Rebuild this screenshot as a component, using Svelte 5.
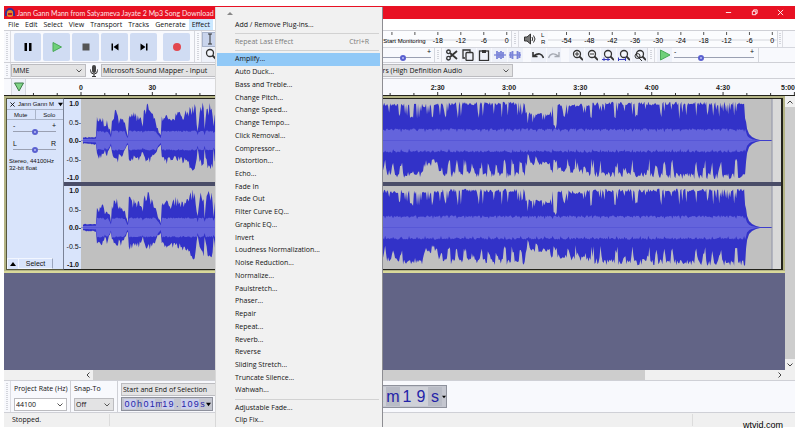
<script lang="ts">
  interface Point {
    x: number;
    up: number;
    down: number;
  }

  const MENUS = ['File', 'Edit', 'Select', 'View', 'Transport', 'Tracks', 'Generate', 'Effect'];

  const EFFECTS = [
    'Amplify...', 'Auto Duck...', 'Bass and Treble...', 'Change Pitch...', 'Change Speed...',
    'Change Tempo...', 'Click Removal...', 'Compressor...', 'Distortion...', 'Echo...',
    'Fade In', 'Fade Out', 'Filter Curve EQ...', 'Graphic EQ...', 'Invert',
    'Loudness Normalization...', 'Noise Reduction...', 'Normalize...', 'Paulstretch...',
    'Phaser...', 'Repair', 'Repeat...', 'Reverb...', 'Reverse', 'Sliding Stretch...',
    'Truncate Silence...', 'Wahwah...',
  ];

  const TRANSPORT = ['Pause', 'Play', 'Stop', 'Skip to Start', 'Skip to End', 'Record'];
  const EDIT_TOOLS = ['Cut', 'Copy', 'Paste', 'Trim', 'Silence'];
  const ZOOM_TOOLS = ['Zoom In', 'Zoom Out', 'Fit Selection', 'Fit Project', 'Zoom Toggle'];

  const LEVELS = [-54, -48, -42, -36, -30, -24, -18, -12, -6, 0];
  const SECONDS = Array.from({ length: 33 }, (_, i) => (i - 2) * 10);

  // peak envelope: position, height above and below the centre line
  const ENVELOPE: number[][] = [
    [0, 3, 3], [15, 4, 4], [16, 25, 16], [18, 22, 18], [22, 24, 17], [24, 15, 12], [26, 22, 16],
    [29, 12, 8], [30, 6, 5], [31, 23, 14], [35, 34, 20], [37, 29, 22], [38, 18, 13], [40, 26, 18],
    [44, 18, 12], [46, 8, 6], [47, 5, 5], [48, 33, 23], [52, 29, 20], [58, 27, 20], [61, 21, 14],
    [62, 16, 12], [63, 30, 18], [67, 37, 23], [71, 31, 20], [74, 24, 17], [77, 13, 9], [80, 5, 5],
    [81, 25, 16], [86, 30, 23], [90, 26, 20], [95, 30, 19], [100, 29, 22], [106, 30, 23],
    [110, 37, 33], [113, 38, 36], [115, 34, 27], [117, 11, 9], [119, 35, 23], [123, 38, 29],
    [124, 12, 9], [126, 34, 25], [129, 38, 33], [132, 34, 29], [133, 15, 10], [135, 34, 30],
    [220, 35, 32], [302, 37, 33], [320, 37, 37], [343, 36, 36], [346, 36, 26], [357, 36, 24],
    [360, 38, 37], [385, 38, 35], [410, 38, 37], [445, 38, 37], [446, 28, 25], [470, 26, 24],
    [471, 37, 33], [473, 37, 33], [474, 15, 21], [477, 16, 23], [478, 37, 31], [500, 36, 33],
    [520, 38, 37], [560, 38, 37], [605, 38, 38], [666, 38, 38], [667, 18, 20], [668, 11, 12],
    [670, 6, 6], [673, 3, 3], [677, 1, 1], [682, 0, 0], [693, 0, 0],
  ];

  const WAVE_WIDTH = 702;
  const CLIP_END = 693;
  const HALF = 41;

  function noise(n: number): number {
    const v = Math.sin(n * 127.1 + 11.7) * 43758.5453;
    return v - Math.floor(v);
  }

  function envelopeAt(x: number): Point {
    let i = 0;
    while (i < ENVELOPE.length - 2 && ENVELOPE[i + 1][0] <= x) i++;
    const [x0, u0, d0] = ENVELOPE[i];
    const [x1, u1, d1] = ENVELOPE[i + 1];
    const t = Math.min(1, (x - x0) / (x1 - x0));
    return { x, up: u0 + (u1 - u0) * t, down: d0 + (d1 - d0) * t };
  }

  function toPath(points: Point[]): string {
    const top = points.map((p) => `${p.x} ${(HALF - p.up).toFixed(1)}`);
    const bottom = points.map((p) => `${p.x} ${(HALF + p.down).toFixed(1)}`).reverse();
    return `M${top.join('L')}L${bottom.join('L')}Z`;
  }

  function buildWave(seed: number) {
    const peak: Point[] = [];
    const rms: Point[] = [];
    for (let x = 2; x <= CLIP_END; x++) {
      const e = envelopeAt(x);
      const tail = x > 666;
      const loud = x > 135 && !tail;
      let up = e.up;
      let down = e.down;
      if (!tail) {
        up *= 1 - noise(x + seed) * (loud ? 0.1 : 0.34);
        down *= 1 - noise(x + seed + 500) * (loud ? 0.18 : 0.3);
      }
      // gaps between beats
      if (loud && noise(x * 3 + 7) > 0.78) up *= 0.6 + noise(x + 3) * 0.25;
      if (loud && x % 8 < 3 && noise(Math.floor(x / 8) + 40) > 0.25) down *= 0.55 + noise(x) * 0.35;
      peak.push({ x, up: up + 0.4, down: down + 0.4 });
      const base = loud ? 12 : tail ? e.up * 0.5 : Math.min(10, e.up * 0.5);
      const beat = loud && x % 8 === 1 ? -2 : 0;
      rms.push({
        x,
        up: Math.max(0, base + beat - noise(x + seed + 90) * base * 0.15),
        down: Math.max(0, base + beat - noise(x + seed + 30) * base * 0.15),
      });
    }
    return { peak: toPath(peak), rms: toPath(rms) };
  }

  const channels = [buildWave(1), buildWave(77)];

  function rulerX(sec: number): string {
    return `${((55 + sec * 2.378) / 769) * 100}%`;
  }

  function rulerLabel(sec: number): string {
    if (sec < 60) return String(sec);
    return `${Math.floor(sec / 60)}:${String(sec % 60).padStart(2, '0')}`;
  }

  let selected = $state('Amplify...');
  let speed = $state(32);
  let volume = $state(68);
  let gain = $state(50);
  let pan = $state(50);
</script>

{#snippet chevron()}
  <svg class="chevron" viewBox="0 0 6 4" aria-hidden="true"><path d="M.5.5 3 3 5.5.5" /></svg>
{/snippet}

{#snippet mic()}
  <svg class="mic" viewBox="0 0 10 12" aria-hidden="true">
    <rect x="3" y="0" width="4" height="8" rx="2" fill="#444" />
    <path d="M1.5 4.5v1a3.5 3.5 0 0 0 7 0v-1M5 9v2.5M3 11.5h4" fill="none" stroke="#333" />
  </svg>
{/snippet}

{#snippet speaker()}
  <svg class="speaker" viewBox="0 0 12 12" aria-hidden="true">
    <path d="M.5 4h2.5l3.5-3v10L3 8H.5z" fill="#777" stroke="#333" />
    <path d="M8 4q1.5 2 0 4M9.5 2.5q3 3.5 0 7" fill="none" stroke="#333" />
  </svg>
{/snippet}

{#snippet meter(first: number, step: number, prompt: boolean)}
  <svg class="meter">
    <line x1="0" y1="9" x2="100%" y2="9" stroke="#d4d6dc" />
    {#each LEVELS as db, i}
      {@const x = `${first + i * step}%`}
      <line x1={x} x2={x} y1="1" y2="4" stroke="#555" />
      {#if !prompt || db > -24}
        <text {x} y="12">{db}</text>
      {/if}
    {/each}
    {#if prompt}
      <text class="prompt" x="63%" y="12">Start Monitoring</text>
    {/if}
  </svg>
{/snippet}

{#snippet loupe()}
  <circle cx="6" cy="5" r="3.5" fill="#f4f6fb" stroke="#333" stroke-width="1.3" />
  <path d="M8.5 7.5 12 11" stroke="#333" stroke-width="1.8" />
{/snippet}

<div class="page">
  <div class="window">
    <header class="titlebar">
      <svg class="logo" viewBox="0 0 10 10" aria-hidden="true">
        <circle cx="5" cy="5" r="4" fill="#e8862a" />
        <path d="M1 8V5a4 4 0 0 1 8 0v3" fill="none" stroke="#2b2f9c" stroke-width="1.8" />
        <path d="M3 6h4" stroke="#c8102e" stroke-width="2" />
      </svg>
      <h1>Jann Gann Mann from Satyameva Jayate 2 Mp3 Song Download</h1>
      <div class="window-buttons">
        <button aria-label="Minimize"><svg viewBox="0 0 8 8"><path d="M1 4h6" /></svg></button>
        <button aria-label="Restore">
          <svg viewBox="0 0 8 8"><path d="M1.5 2.5h4v4h-4zM3 2.5V1h4v4H5.5" /></svg>
        </button>
        <button aria-label="Close"><svg viewBox="0 0 8 8"><path d="m1 1 6 6M7 1 1 7" /></svg></button>
      </div>
    </header>

    <nav class="menubar">
      {#each MENUS as name}
        <button class:open={name === 'Effect'}>{name}</button>
      {/each}
    </nav>

    <div class="toolbars">
      <div class="toolbar transport">
        <span class="grabber"></span>
        {#each TRANSPORT as name}
          <button class="big" class:record={name === 'Record'} aria-label={name}>
            <svg viewBox="0 0 10 10">
              {#if name === 'Pause'}
                <path d="M1.5 1H4v8H1.5zM6 1h2.5v8H6z" fill="#000" />
              {:else if name === 'Play'}
                <path d="M1 .5 9.5 5 1 9.5z" fill="#6fd07a" stroke="#49a957" />
              {:else if name === 'Stop'}
                <path d="M1.5 1.5h7v7h-7z" fill="#555" />
              {:else if name === 'Skip to Start'}
                <path d="M1.5 1.5H3v7H1.5zM8.5 1.5v7L3.5 5z" fill="#000" />
              {:else if name === 'Skip to End'}
                <path d="M7 1.5h1.5v7H7zM1.5 1.5v7l5-3.5z" fill="#000" />
              {:else}
                <circle cx="5" cy="5" r="4" fill="#e2474f" />
              {/if}
            </svg>
          </button>
        {/each}
      </div>

      <div class="toolbar tools">
        <span class="grabber"></span>
        <div class="tool-grid">
          <button class="pressed" aria-label="Selection tool">
            <svg viewBox="0 0 12 12"><path d="M4 1h4M6 1v10M4 11h4" stroke="#333" /></svg>
          </button>
          <button aria-label="Envelope tool">
            <svg viewBox="0 0 12 12"><path d="M1 3l5 3 5-3M1 9l5-3 5 3" stroke="#333" fill="none" /></svg>
          </button>
          <button aria-label="Zoom tool"><svg viewBox="0 0 12 12">{@render loupe()}</svg></button>
          <button aria-label="Multi-tool">
            <svg viewBox="0 0 12 12"><path d="M6 1v10M1 6h10M2 2l8 8M10 2l-8 8" stroke="#333" /></svg>
          </button>
        </div>
      </div>

      <div class="stack">
        <div class="row">
          <div class="toolbar recording">
            <span class="grabber"></span>
            {@render mic()}
            <span class="lr"><span>L</span><span>R</span></span>
            {@render meter(8.3, 10, true)}
          </div>
          <div class="toolbar playback">
            <span class="grabber"></span>
            {@render speaker()}
            <span class="lr"><span>L</span><span>R</span></span>
            {@render meter(8.1, 10, false)}
          </div>
          <span class="grabber last"></span>
        </div>

        <div class="row lower">
          <div class="toolbar mixer">
            <span class="grabber"></span>
            {@render speaker()}
            <label class="slider">
              <span class="ends"><span>-</span><span>+</span></span>
              <input type="range" aria-label="Playback volume" bind:value={volume} />
            </label>
          </div>

          <div class="toolbar edit">
            <span class="grabber"></span>
            {#each EDIT_TOOLS as name}
              <button aria-label={name}>
                <svg viewBox="0 0 12 12" fill="none" stroke="#333" stroke-width="1.3">
                  {#if name === 'Cut'}
                    <path d="M11 2 4 8M11 10 4 4" stroke-width="1.8" />
                    <circle cx="2.5" cy="2.8" r="1.8" /><circle cx="2.5" cy="9.2" r="1.8" />
                  {:else if name === 'Copy'}
                    <path d="M3 9H1V1h7v2" /><rect x="4" y="3.5" width="7" height="8" rx="1" />
                  {:else if name === 'Paste'}
                    <rect x="1.5" y="2" width="9" height="9.5" /><path d="M4 2.5h4" stroke-width="3" />
                  {:else if name === 'Trim'}
                    <path d="M0 6h12" stroke="#7a84d8" />
                    <path d="M3 2v8M5 3v6M7 2v8M9 3v6" stroke="#7a84d8" stroke-width="1.8" />
                  {:else}
                    <path d="M0 6h12" stroke="#7a84d8" />
                    <path d="M1.5 3v6M3.5 2v8M8.5 2v8M10.5 3v6" stroke="#7a84d8" stroke-width="1.8" />
                  {/if}
                </svg>
              </button>
            {/each}
            <button class="gap" aria-label="Undo">
              <svg viewBox="0 0 12 12" fill="none" stroke="#333" stroke-width="1.6">
                <path d="M11.5 9Q9 2 1.5 7M1 3v4.5h4.5" />
              </svg>
            </button>
            <button aria-label="Redo">
              <svg viewBox="0 0 12 12" fill="none" stroke="#a5a9b2" stroke-width="1.4">
                <path d="M.5 9Q3 2 10.5 7M11 3v4.5H6.5" />
              </svg>
            </button>
            {#each ZOOM_TOOLS as name, i}
              <button class:gap={i === 0} aria-label={name}>
                <svg viewBox="0 0 12 12" fill="none">
                  {@render loupe()}
                  {#if name === 'Zoom In'}
                    <path d="M4 5h4M6 3v4" stroke="#333" />
                  {:else if name === 'Zoom Out'}
                    <path d="M4 5h4" stroke="#333" />
                  {:else if name === 'Fit Selection'}
                    <path d="M0 10.5h8M2 8.5v4M6 8.5v4" stroke="#3b3fc0" />
                  {:else if name === 'Fit Project'}
                    <path d="M0 10.5h8M.5 8.5v4M7.5 8.5v4" stroke="#3b3fc0" />
                  {:else}
                    <circle cx="3.5" cy="7" r="2.5" stroke="#333" /><path d="m5 9 3 3" stroke="#333" />
                  {/if}
                </svg>
              </button>
            {/each}
          </div>

          <div class="toolbar speed">
            <span class="grabber"></span>
            <button aria-label="Play at speed">
              <svg viewBox="0 0 12 12"><path d="M1.5 1 11 6l-9.5 5z" fill="#6fd07a" stroke="#49a957" /></svg>
            </button>
            <label class="slider">
              <span class="ends"><span>-</span><span>+</span></span>
              <input type="range" aria-label="Playback speed" bind:value={speed} />
            </label>
          </div>
        </div>
      </div>
    </div>

    <div class="devices">
      <span class="grabber"></span>
      <span class="select host">
        <select aria-label="Audio host"><option>MME</option></select>{@render chevron()}
      </span>
      {@render mic()}
      <span class="select input">
        <select aria-label="Recording device"><option>Microsoft Sound Mapper - Input</option></select>
        {@render chevron()}
      </span>
      {@render speaker()}
      <span class="select output">
        <select aria-label="Playback device"><option>Speakers (High Definition Audio</option></select>
        {@render chevron()}
      </span>
    </div>

    <div class="timeline">
      <button class="pin" aria-label="Pinned play head">
        <svg viewBox="0 0 12 10"><path d="M1.5 1h9L6 9z" fill="#7fd486" stroke="#3d7a48" /></svg>
      </button>
      <svg class="ruler">
        {#each SECONDS as sec}
          {@const major = sec % 30 === 0}
          <line x1={rulerX(sec)} x2={rulerX(sec)} y1={major ? 13 : 14} y2="16" stroke="#333" />
          {#if major && sec >= 0 && sec < 300}
            <text x={rulerX(sec)} y="11" text-anchor="middle">{rulerLabel(sec)}</text>
          {/if}
        {/each}
        <text x="100%" y="11" text-anchor="end">5:00</text>
      </svg>
    </div>

    <main class="workspace">
      <div class="canvas">
        <section class="track">
          <div class="panel">
            <div class="panel-title">
              <button aria-label="Close track">
                <svg viewBox="0 0 6 6"><path d="m.5.5 5 5M5.5.5l-5 5" stroke="#000" /></svg>
              </button>
              <button class="name">
                Jann Gann M
                <svg viewBox="0 0 6 5" aria-hidden="true"><path d="M0 .5h6L3 4.5z" fill="#000" /></svg>
              </button>
            </div>
            <div class="panel-pair"><button>Mute</button><button>Solo</button></div>
            <label class="slider">
              <span class="ends"><span>-</span><span>+</span></span>
              <input type="range" aria-label="Gain" bind:value={gain} />
            </label>
            <label class="slider">
              <span class="ends"><span>L</span><span>R</span></span>
              <input type="range" aria-label="Pan" bind:value={pan} />
            </label>
            <p>Stereo, 44100Hz<br />32-bit float</p>
            <div class="panel-foot">
              <button aria-label="Collapse">
                <svg viewBox="0 0 6 4"><path d="M3 0 6 4H0z" fill="#000" /></svg>
              </button>
              <button class="choose">Select</button>
            </div>
          </div>

          <div class="channels">
            {#each channels as wave}
              <div class="channel">
                <div class="scale">
                  <b>1.0</b><span>0.5-</span><b>0.0-</b><span>-0.5-</span><b>-1.0</b>
                </div>
                <svg class="wave" viewBox="0 0 {WAVE_WIDTH} 82" preserveAspectRatio="none">
                  <rect width={CLIP_END} height="82" fill="#c0c0c0" />
                  <path d={wave.peak} fill="#3232c8" />
                  <path d={wave.rms} fill="#6464dc" />
                  <line x1="0" x2={CLIP_END} y1="41" y2="41" stroke="#4a4ad0" stroke-width="0.5" />
                  <line x1={CLIP_END} x2={CLIP_END} y1="0" y2="82" stroke="#8f93a8" />
                </svg>
              </div>
            {/each}
          </div>
        </section>
      </div>

      <div class="vscroll">
        <button aria-label="Scroll up"><svg viewBox="0 0 6 4"><path d="M.5 3.5 3 1l2.5 2.5" /></svg></button>
        <span class="thumb"></span>
        <button aria-label="Scroll down">{@render chevron()}</button>
      </div>
    </main>

    <div class="hscroll">
      <button aria-label="Scroll left"><svg viewBox="0 0 4 6"><path d="M3.5.5 1 3l2.5 2.5" /></svg></button>
      <div class="bar"><span class="thumb"></span></div>
      <button aria-label="Scroll right"><svg viewBox="0 0 4 6"><path d="M.5.5 3 3 .5 5.5" /></svg></button>
    </div>

    <div class="selection-bar">
      <span class="grabber"></span>
      <div class="field rate">
        <label for="rate">Project Rate (Hz)</label>
        <span class="select white"><select id="rate"><option>44100</option></select>{@render chevron()}</span>
      </div>
      <div class="field snap">
        <label for="snap">Snap-To</label>
        <span class="select"><select id="snap"><option>Off</option></select>{@render chevron()}</span>
      </div>
      <div class="field range">
        <span class="select">
          <select aria-label="Selection mode"><option>Start and End of Selection</option></select>
          {@render chevron()}
        </span>
        <div class="timecode">
          {#each '00h01m19.109s' as ch}<span class:unit={/\D/.test(ch)}>{ch}</span>{/each}
          <svg viewBox="0 0 6 5" aria-hidden="true"><path d="M0 .5h6L3 4.5z" fill="#000" /></svg>
        </div>
      </div>
      <div class="position">
        {#each '00h01m19s' as ch}<span class:unit={/\D/.test(ch)}>{ch}</span>{/each}
        <svg viewBox="0 0 6 5" aria-hidden="true"><path d="M0 .5h6L3 4.5z" fill="#000" /></svg>
      </div>
    </div>

    <footer class="status"><span>Stopped.</span><span></span><span></span></footer>

    <div class="popup" role="menu">
      <svg class="scroll-hint" viewBox="0 0 6 3" aria-hidden="true"><path d="M3 0 6 3H0z" /></svg>
      <button class="plain" role="menuitem">Add / Remove Plug-ins...</button>
      <hr />
      <button class="plain" role="menuitem" disabled><span>Repeat Last Effect</span><span>Ctrl+R</span></button>
      <hr />
      <div class="effects">
        {#each EFFECTS as name}
          <button role="menuitem" class:selected={selected === name} onmouseenter={() => (selected = name)}>
            {name}
          </button>
        {/each}
      </div>
      <hr />
      <button class="plain" role="menuitem">Adjustable Fade...</button>
      <button class="plain" role="menuitem">Clip Fix...</button>
    </div>
  </div>

  <span class="watermark">wtvid.com</span>
</div>

<style>
  :global(body) {
    background: #fff;
  }

  .page {
    position: relative;
    box-sizing: border-box;
    display: flex;
    min-height: 100vh;
    padding: 6px 5px 6px 4px;
    background: #fff;
    color: #111;
    font: 7px/10px 'Open Sans', 'Noto Sans', sans-serif;
  }

  .page * {
    box-sizing: border-box;
  }

  .window {
    position: relative;
    flex: 1;
    min-width: 0;
    display: flex;
    flex-direction: column;
    background: #f8f9fd;
  }

  button,
  select,
  input {
    margin: 0;
    padding: 0;
    border: 0;
    background: none;
    color: inherit;
    font: inherit;
  }

  svg {
    display: block;
    flex: none;
  }

  .titlebar {
    display: flex;
    align-items: center;
    gap: 2px;
    height: 13px;
    padding: 0 2px 0 1px;
    background: #e81123;
    color: #fde6e8;
  }

  .logo {
    width: 10px;
    height: 10px;
  }

  h1 {
    flex: 1;
    margin: 0;
    font-family: Lato, 'Open Sans', sans-serif;
    font-size: 7px;
    font-weight: 400;
    white-space: nowrap;
  }

  .window-buttons {
    display: flex;
  }

  .window-buttons button {
    display: grid;
    place-items: center;
    width: 26px;
    height: 13px;
  }

  .window-buttons svg {
    width: 7px;
    height: 7px;
    fill: none;
    stroke: #fff;
  }

  .menubar {
    display: flex;
    height: 11px;
    padding-left: 1px;
    background: #fff;
  }

  .menubar button {
    padding: 0 3px;
  }

  .menubar .open {
    background: #cce8ff;
  }

  .toolbars {
    display: flex;
    height: 33px;
    border-top: 1px solid #cfd0d6;
    border-bottom: 1px solid #cfd0d6;
  }

  .toolbar {
    display: flex;
    align-items: center;
    border-right: 1px solid #d5d7de;
  }

  .grabber {
    flex: none;
    align-self: stretch;
    width: 7px;
    padding: 2px;
    border-right: 1px solid #dcdde3;
    background: repeating-linear-gradient(#d3d5dc 0 1px, #f8f9fd 1px 2px);
    background-clip: content-box;
  }

  .transport {
    width: 191px;
    gap: 2px;
  }

  .transport .grabber {
    margin-right: 1px;
  }

  .big {
    display: grid;
    place-items: center;
    width: 27px;
    height: 28px;
    border-radius: 2px;
    background: #d0dcf3;
  }

  .big svg {
    width: 10px;
    height: 10px;
  }

  .record {
    margin-left: 4px;
  }

  .tools {
    width: 50px;
  }

  .tool-grid {
    display: grid;
    grid-template-columns: 15px 15px;
    grid-template-rows: 15px 15px;
  }

  .tool-grid button,
  .edit button,
  .speed > button {
    display: grid;
    place-items: center;
    background: #eef1f9;
  }

  .tool-grid .pressed {
    border: 1px solid #a9b4cc;
    background: #c9d4ec;
  }

  .tool-grid svg,
  .edit svg,
  .speed > button svg {
    width: 12px;
    height: 12px;
  }

  .stack {
    flex: 1;
    min-width: 0;
  }

  .row {
    display: flex;
    height: 16px;
  }

  .lower {
    height: 15px;
    border-top: 1px solid #d5d7de;
  }

  .recording {
    width: 267px;
    gap: 3px;
  }

  .playback {
    flex: 1;
    gap: 3px;
  }

  .last {
    width: 5px;
    margin-right: 12px;
    padding: 2px 1px;
  }

  .mic {
    width: 10px;
    height: 12px;
    margin: 0 3px;
  }

  .speaker {
    width: 12px;
    height: 12px;
    margin: 0 2px;
  }

  .lr {
    display: flex;
    flex-direction: column;
    font: 6px/7px 'Liberation Sans', sans-serif;
  }

  .meter {
    flex: 1;
    width: 100%;
    min-width: 0;
    height: 16px;
    background: #fbfcfe;
    font: 7px 'Liberation Sans', sans-serif;
    text-anchor: middle;
    overflow: hidden;
  }

  .meter .prompt {
    font-size: 6px;
    text-anchor: end;
  }

  .mixer {
    width: 190px;
    padding-right: 3px;
  }

  .mixer .slider {
    flex: 1;
    padding-left: 80px;
  }

  .edit {
    width: 213px;
    gap: 1px;
  }

  .edit button,
  .speed > button {
    width: 15px;
    height: 14px;
  }

  .edit .grabber {
    margin-right: 2px;
  }

  .edit .gap {
    margin-left: 7px;
  }

  .speed {
    width: 111px;
    gap: 2px;
    padding-right: 4px;
  }

  .speed .slider {
    flex: 1;
  }

  .slider {
    display: flex;
    flex-direction: column;
    min-width: 0;
  }

  .ends {
    display: flex;
    justify-content: space-between;
    font: 7px/5px 'Liberation Sans', sans-serif;
  }

  input[type='range'] {
    appearance: none;
    width: 100%;
    height: 7px;
    background: linear-gradient(#9aa0b2, #9aa0b2) center / 100% 1px no-repeat;
  }

  input[type='range']::-webkit-slider-thumb {
    appearance: none;
    width: 6px;
    height: 6px;
    border: 2px solid #5a60d0;
    border-radius: 50%;
    background: #b8bdf2;
  }

  .devices {
    display: flex;
    align-items: center;
    height: 16px;
    border-bottom: 1px solid #cfd0d6;
  }

  .select {
    position: relative;
    display: block;
    height: 13px;
    border: 1px solid #bcbcc0;
    background: #e3e3e4;
  }

  .select select {
    display: block;
    appearance: none;
    width: 100%;
    height: 11px;
    padding: 0 10px 0 1px;
  }

  .select .chevron {
    position: absolute;
    top: 4px;
    right: 3px;
  }

  .chevron {
    width: 6px;
    height: 4px;
    fill: none;
    stroke: #555;
  }

  .host {
    width: 75px;
  }

  .devices .mic {
    margin: 0 2px 0 3px;
  }

  .input {
    width: 240px;
  }

  .output {
    width: 156px;
  }

  .timeline {
    display: flex;
    height: 17px;
    padding-left: 7px;
    border-bottom: 1px solid #23231c;
  }

  .pin {
    display: grid;
    place-items: center;
    width: 15px;
    border: 1px solid #d5d7de;
    border-width: 0 1px;
    background: #eef1f9;
  }

  .pin svg {
    width: 12px;
    height: 10px;
  }

  .ruler {
    flex: 1;
    min-width: 0;
    height: 16px;
    font: bold 7px 'Liberation Sans', sans-serif;
    fill: #222;
  }

  .workspace {
    flex: 1;
    display: flex;
    background: #626486;
  }

  .canvas {
    flex: 1;
    min-width: 0;
  }

  .track {
    display: flex;
    padding: 2px 2px 1px;
    border-bottom: 2px solid #d9d99a;
    background: #b4b486;
  }

  .panel {
    display: flex;
    flex-direction: column;
    width: 57px;
    border: 1px solid #55563c;
    border-right: 0;
    background: #d9e4fb;
    font: 7px/8px 'Liberation Sans', sans-serif;
  }

  .panel-title {
    display: flex;
    align-items: center;
    height: 11px;
    border-bottom: 1px solid #aab4c8;
  }

  .panel-title button:first-child {
    display: grid;
    place-items: center;
    width: 11px;
  }

  .panel-title svg {
    width: 5px;
    height: 5px;
  }

  .panel-title .name {
    flex: 1;
    display: flex;
    align-items: center;
    justify-content: space-between;
    font-size: 6px;
    white-space: nowrap;
  }

  .panel-pair {
    display: flex;
    height: 10px;
    border-bottom: 1px solid #aab4c8;
  }

  .panel-pair button {
    flex: 1;
    font-size: 6px;
  }

  .panel-pair button + button {
    border-left: 1px solid #aab4c8;
  }

  .panel .slider {
    padding: 3px 7px 3px 6px;
  }

  .panel p {
    flex: 1;
    margin: 2px 0 0 2px;
    font-size: 6px;
    line-height: 7px;
    white-space: nowrap;
  }

  .panel-foot {
    display: flex;
    height: 11px;
  }

  .panel-foot button {
    display: grid;
    place-items: center;
    width: 11px;
    border: 1px solid #f2f6ff;
    border-width: 1px 0 0 1px;
  }

  .panel-foot .choose {
    width: 35px;
    border-width: 1px;
    border-right-color: #9aa5bd;
  }

  .panel-foot svg {
    width: 6px;
    height: 4px;
  }

  .channels {
    flex: 1;
    display: flex;
    flex-direction: column;
    gap: 4px;
    min-width: 0;
    border: 1px solid #23231c;
    border-right-width: 2px;
    border-left: 1px solid #7a8296;
    background: #4a4d68;
  }

  .channel {
    display: flex;
    height: 83px;
  }

  .scale {
    display: flex;
    flex-direction: column;
    justify-content: space-between;
    align-items: flex-end;
    width: 17px;
    background: #d9e4fb;
    font: 7px/9px 'Liberation Sans', sans-serif;
  }

  .scale b:first-child,
  .scale b:last-child {
    padding-right: 2px;
  }

  .wave {
    flex: 1;
    min-width: 0;
    height: 100%;
    background: #d9d9d9;
  }

  .vscroll {
    display: flex;
    flex-direction: column;
    width: 10px;
    background: #f0f0f0;
  }

  .vscroll button {
    display: grid;
    place-items: center;
    height: 11px;
  }

  .vscroll svg,
  .hscroll svg {
    fill: none;
    stroke: #444;
  }

  .vscroll svg {
    width: 6px;
    height: 4px;
  }

  .vscroll .thumb {
    flex: 1;
    background: #cdcdcd;
  }

  .hscroll {
    display: flex;
    height: 10px;
    padding: 0 10px 0 79px;
    background: #f0f0f0;
  }

  .hscroll button {
    display: grid;
    place-items: center;
    width: 10px;
  }

  .hscroll svg {
    width: 4px;
    height: 6px;
  }

  .bar {
    flex: 1;
    display: flex;
  }

  .bar .thumb {
    width: 81%;
    background: #cdcdcd;
  }

  .selection-bar {
    display: flex;
    height: 33px;
    border-top: 1px solid #cfd0d6;
    border-bottom: 1px solid #cfd0d6;
  }

  .field {
    display: flex;
    flex-direction: column;
    justify-content: space-between;
    padding: 2px 3px 1px;
    border-right: 1px solid #cfd0d6;
  }

  .field label {
    line-height: 12px;
    white-space: nowrap;
  }

  .rate {
    width: 60px;
  }

  .select.white {
    background: #fff;
  }

  .snap {
    width: 47px;
  }

  .range {
    width: 190px;
  }

  .timecode,
  .position {
    display: flex;
    align-items: center;
    align-self: flex-start;
    border: 1px solid #8e919c;
    background: #c4c6cf;
    color: #2424a8;
    font-family: 'Liberation Sans', sans-serif;
  }

  .timecode {
    justify-content: space-between;
    width: 92px;
    height: 14px;
    padding: 0 1px 0 2px;
    font-size: 9px;
  }

  .timecode span {
    width: 6px;
    background: #ccd0ec;
    line-height: 10px;
    text-align: center;
  }

  .timecode .unit {
    background: none;
  }

  .timecode svg {
    width: 5px;
    height: 5px;
  }

  .position {
    height: 23px;
    margin: 4px 0 0 7px;
    font-size: 16px;
  }

  .position span {
    width: 14px;
    background: #cfd1d8;
    line-height: 19px;
    text-align: center;
  }

  .position .unit {
    background: #b9bcc6;
  }

  .position svg {
    width: 4px;
    height: 4px;
  }

  .status {
    display: flex;
    align-items: center;
    height: 14px;
    background: #f0f0f0;
  }

  .status span {
    flex: 1;
    border-left: 1px solid #dcdcdc;
  }

  .status span:first-child {
    flex: none;
    width: 105px;
    padding-left: 8px;
    border: 0;
  }

  .status span:last-child {
    flex: none;
    width: 103px;
  }

  .status span:not(:first-child) {
    height: 12px;
  }

  .popup {
    position: absolute;
    top: 1px;
    bottom: 0;
    left: 211px;
    display: flex;
    flex-direction: column;
    width: 168px;
    padding: 5px 2px 1px 1px;
    border-right: 1px solid #8d8d92;
    border-left: 1px solid #d8d8d8;
    background: #f1f1f1;
  }

  .popup hr {
    width: 144px;
    margin: 2px 0 2px 18px;
    border: 0;
    border-top: 1px solid #d2d2d2;
  }

  .popup button {
    display: flex;
    align-items: center;
    justify-content: space-between;
    padding: 0 11px 0 18px;
    text-align: left;
  }

  .popup .plain {
    height: 12px;
  }

  .popup .plain:disabled {
    color: #7a7a7a;
  }

  .effects {
    flex: 1;
    display: flex;
    flex-direction: column;
  }

  .effects button {
    flex: 1;
  }

  .effects .selected {
    background: #91c9f7;
  }

  .scroll-hint {
    width: 6px;
    height: 3px;
    margin: 0 0 4px 10px;
    fill: #888;
  }

  .watermark {
    position: absolute;
    right: 17px;
    bottom: 2px;
    color: #000;
    font: 9px/11px 'Liberation Sans', sans-serif;
  }
</style>
